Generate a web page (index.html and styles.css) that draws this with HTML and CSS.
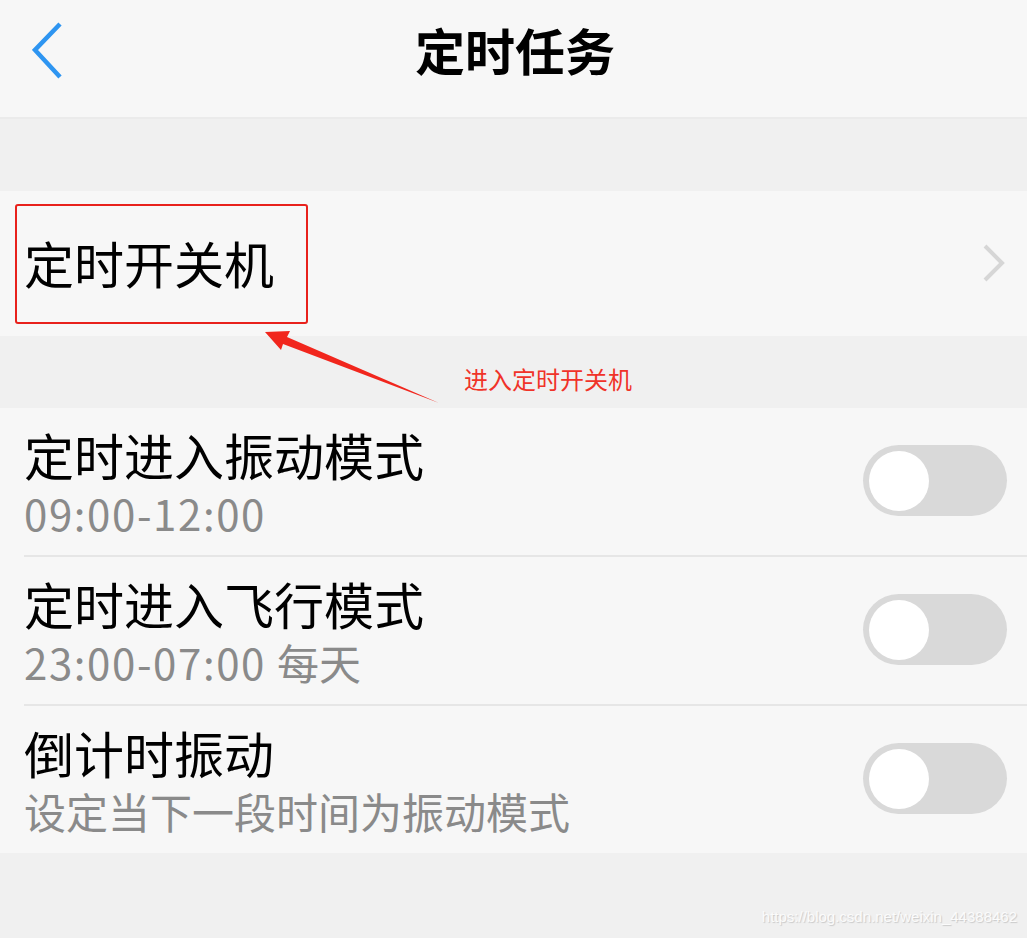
FILE: index.html
```html
<!DOCTYPE html>
<html lang="zh">
<head>
<meta charset="utf-8">
<title>定时任务</title>
<link rel="stylesheet" href="styles.css">
</head>
<body>
<div class="page">
  <header class="header">
    <svg class="back" width="40" height="60" viewBox="0 0 40 60">
      <polyline points="28,3 3,29 28,56" fill="none" stroke="#2e95f1" stroke-width="4.5" stroke-linecap="butt" stroke-linejoin="miter"/>
    </svg>
    <h1 class="title">定时任务</h1>
  </header>

  <div class="gap"></div>

  <section class="group">
    <div class="nav-row">
      <span class="nav-label">定时开关机</span>
      <svg class="chev" width="26" height="40" viewBox="0 0 26 40">
        <polyline points="4,3 21,20 4,37" fill="none" stroke="#d6d6d6" stroke-width="4"/>
      </svg>
    </div>
  </section>

  <div class="gap"></div>

  <section class="group">
    <div class="row">
      <div class="texts">
        <div class="row-title">定时进入振动模式</div>
        <div class="row-sub"><span class="time">09:00-12:00</span></div>
      </div>
      <div class="switch"><div class="knob"></div></div>
    </div>
    <div class="row sep">
      <div class="texts">
        <div class="row-title">定时进入飞行模式</div>
        <div class="row-sub"><span class="time">23:00-07:00 </span>每天</div>
      </div>
      <div class="switch"><div class="knob"></div></div>
    </div>
    <div class="row sep">
      <div class="texts">
        <div class="row-title">倒计时振动</div>
        <div class="row-sub">设定当下一段时间为振动模式</div>
      </div>
      <div class="switch"><div class="knob"></div></div>
    </div>
  </section>

  <div class="mark-box"></div>
  <svg class="mark-arrow" width="1027" height="938" viewBox="0 0 1027 938">
    <polygon points="265,332 290,331 287,337 439,403 283,344 281,350" fill="#f1261d"/>
  </svg>
  <div class="mark-text">进入定时开关机</div>
  <div class="watermark">https://blog.csdn.net/weixin_44388462</div>
</div>
</body>
</html>
```

FILE: styles.css
```css
html, body {
  margin: 0;
  padding: 0;
}
body {
  background: #f0f0f0;
  font-family: "Noto Sans CJK SC", "Noto Sans", sans-serif;
  color: #000;
}
.page {
  position: relative;
  width: 1027px;
  height: 938px;
  overflow: hidden;
  background: #f0f0f0;
}
.header {
  height: 117px;
  border-bottom: 2px solid #ebebeb;
  background: #f7f7f7;
  display: flex;
  align-items: center;
  justify-content: center;
  position: relative;
}
.back {
  position: absolute;
  left: 32px;
  top: 21px;
}
.title {
  margin: 0;
  font-size: 50px;
  font-weight: 700;
  line-height: 60px;
  margin-top: -20px;
  margin-left: 3px;
}
.gap {
  height: 72px;
}
.group {
  background: #f7f7f7;
}
.nav-row {
  height: 145px;
  display: flex;
  align-items: center;
  justify-content: space-between;
  padding: 0 20px 0 24px;
}
.nav-label {
  font-size: 50px;
  line-height: 60px;
  margin-top: -4px;
}
.chev {
  margin-top: -2px;
}
.row {
  height: 147px;
  display: flex;
  align-items: flex-start;
  justify-content: space-between;
  margin-left: 24px;
  padding-right: 20px;
}
.row.sep {
  border-top: 2px solid #e6e6e6;
}
.texts {
  padding-top: 16px;
}
.row-title {
  font-size: 50px;
  line-height: 60px;
}
.row-sub {
  font-size: 42px;
  line-height: 58px;
  color: #8a8a8a;
}
.time {
  letter-spacing: 1.6px;
}
.switch {
  width: 144px;
  height: 71px;
  border-radius: 36px;
  background: #d9d9d9;
  margin-top: 37px;
  position: relative;
  flex: none;
}
.knob {
  position: absolute;
  left: 6px;
  top: 6px;
  width: 60px;
  height: 60px;
  border-radius: 50%;
  background: #ffffff;
}
.mark-box {
  position: absolute;
  left: 15px;
  top: 204px;
  width: 289px;
  height: 116px;
  border: 2.5px solid #e8211c;
  border-radius: 3px;
}
.mark-arrow {
  position: absolute;
  left: 0;
  top: 0;
}
.mark-text {
  position: absolute;
  left: 464px;
  top: 364px;
  font-size: 24px;
  line-height: 30px;
  color: #f03329;
}
.watermark {
  position: absolute;
  right: 10px;
  top: 907px;
  font-family: "Liberation Sans", Arial, sans-serif;
  font-size: 15px;
  line-height: 20px;
  color: #fbfbfb;
  text-shadow: 1px 1px 1px #c9c9c9;
}
```
